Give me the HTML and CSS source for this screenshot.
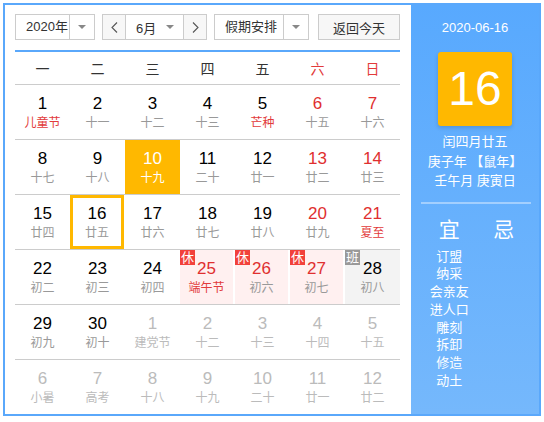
FILE: index.html
```html
<!DOCTYPE html>
<html lang="zh-CN">
<head>
<meta charset="utf-8">
<title>万年历</title>
<link rel="stylesheet" href="styles.css">
</head>
<body>
<div class="cal">
  <div class="main">
    <div class="toolbar">
      <div class="sel year"><span class="val">2020年</span><span class="arr"><i class="tri"></i></span></div>
      <div class="mgroup">
        <span class="nav nav-prev"><svg width="7" height="11" viewBox="0 0 7 11"><path d="M6 0.5 L1 5.5 L6 10.5" fill="none" stroke="#555" stroke-width="1.1"/></svg></span>
        <span class="mval"><span>6月</span><i class="tri"></i></span>
        <span class="nav nav-next"><svg width="7" height="11" viewBox="0 0 7 11"><path d="M1 0.5 L6 5.5 L1 10.5" fill="none" stroke="#555" stroke-width="1.1"/></svg></span>
      </div>
      <div class="sel hol"><span class="val">假期安排</span><span class="arr"><i class="tri"></i></span></div>
      <span class="today">返回今天</span>
    </div>
    <div class="grid">
      <div class="head">
        <span>一</span><span>二</span><span>三</span><span>四</span><span>五</span><span class="we">六</span><span class="we">日</span>
      </div>
      <div class="row">
        <div class="cell"><b>1</b><em class="fest">儿童节</em></div>
        <div class="cell"><b>2</b><em>十一</em></div>
        <div class="cell"><b>3</b><em>十二</em></div>
        <div class="cell"><b>4</b><em>十三</em></div>
        <div class="cell"><b>5</b><em class="fest">芒种</em></div>
        <div class="cell red"><b>6</b><em>十五</em></div>
        <div class="cell red"><b>7</b><em>十六</em></div>
      </div>
      <div class="row">
        <div class="cell"><b>8</b><em>十七</em></div>
        <div class="cell"><b>9</b><em>十八</em></div>
        <div class="cell now"><b>10</b><em>十九</em></div>
        <div class="cell"><b>11</b><em>二十</em></div>
        <div class="cell"><b>12</b><em>廿一</em></div>
        <div class="cell red"><b>13</b><em>廿二</em></div>
        <div class="cell red"><b>14</b><em>廿三</em></div>
      </div>
      <div class="row">
        <div class="cell"><b>15</b><em>廿四</em></div>
        <div class="cell picked"><b>16</b><em>廿五</em></div>
        <div class="cell"><b>17</b><em>廿六</em></div>
        <div class="cell"><b>18</b><em>廿七</em></div>
        <div class="cell"><b>19</b><em>廿八</em></div>
        <div class="cell red"><b>20</b><em>廿九</em></div>
        <div class="cell red"><b>21</b><em class="fest">夏至</em></div>
      </div>
      <div class="row">
        <div class="cell"><b>22</b><em>初二</em></div>
        <div class="cell"><b>23</b><em>初三</em></div>
        <div class="cell"><b>24</b><em>初四</em></div>
        <div class="cell red rest"><span class="badge">休</span><b>25</b><em class="fest">端午节</em></div>
        <div class="cell red rest"><span class="badge">休</span><b>26</b><em>初六</em></div>
        <div class="cell red rest"><span class="badge">休</span><b>27</b><em>初七</em></div>
        <div class="cell work"><span class="badge gray">班</span><b>28</b><em>初八</em></div>
      </div>
      <div class="row">
        <div class="cell"><b>29</b><em>初九</em></div>
        <div class="cell"><b>30</b><em>初十</em></div>
        <div class="cell other"><b>1</b><em>建党节</em></div>
        <div class="cell other"><b>2</b><em>十二</em></div>
        <div class="cell other"><b>3</b><em>十三</em></div>
        <div class="cell other"><b>4</b><em>十四</em></div>
        <div class="cell other"><b>5</b><em>十五</em></div>
      </div>
      <div class="row last">
        <div class="cell other"><b>6</b><em>小暑</em></div>
        <div class="cell other"><b>7</b><em>高考</em></div>
        <div class="cell other"><b>8</b><em>十八</em></div>
        <div class="cell other"><b>9</b><em>十九</em></div>
        <div class="cell other"><b>10</b><em>二十</em></div>
        <div class="cell other"><b>11</b><em>廿一</em></div>
        <div class="cell other"><b>12</b><em>廿二</em></div>
      </div>
    </div>
  </div>
  <div class="side">
    <div class="sdate">2020-06-16</div>
    <div class="bigday">16</div>
    <div class="lunar">
      <div>闰四月廿五</div>
      <div>庚子年 【鼠年】</div>
      <div>壬午月 庚寅日</div>
    </div>
    <div class="divider"></div>
    <div class="yiji">
      <div class="col">
        <div class="ttl">宜</div>
        <ul>
          <li>订盟</li><li>纳采</li><li>会亲友</li><li>进人口</li><li>雕刻</li><li>拆卸</li><li>修造</li><li>动土</li>
        </ul>
      </div>
      <div class="col">
        <div class="ttl">忌</div>
      </div>
    </div>
  </div>
</div>
</body>
</html>
```
FILE: styles.css
```css
body {
  margin: 0;
  font-family: "Liberation Sans", Arial, "Noto Sans CJK SC", sans-serif;
  color: #000;
}
.cal {
  margin: 3px;
  width: 534px;
  height: 409px;
  border: 2px solid #5aa8fb;
  display: flex;
  background: #fff;
}
.main {
  width: 406px;
  box-sizing: border-box;
  padding: 9px 11px 0 10px;
}
.toolbar {
  display: flex;
  height: 26px;
  font-size: 13px;
  color: #333;
}
.sel, .mgroup, .today {
  box-sizing: border-box;
  height: 26px;
  border: 1px solid #ccc;
  display: flex;
  align-items: center;
}
.year { width: 80px; }
.hol { width: 95px; margin-left: 7px; }
.sel .val {
  flex: 1;
  padding-left: 10px;
  height: 24px;
  line-height: 24px;
  border-right: 1px solid #ccc;
}
.sel .arr {
  width: 24px;
  display: flex;
  justify-content: center;
  align-items: center;
}
.tri {
  display: block;
  width: 0;
  height: 0;
  border-left: 4px solid transparent;
  border-right: 4px solid transparent;
  border-top: 4px solid #888;
}
.mgroup {
  width: 105px;
  margin-left: 7px;
}
.nav {
  width: 22px;
  height: 24px;
  background: #f7f7f7;
  display: flex;
  justify-content: center;
  align-items: center;
}
.nav-prev { border-right: 1px solid #ccc; }
.nav-next { border-left: 1px solid #ccc; }
.mval {
  flex: 1;
  display: flex;
  align-items: center;
  justify-content: space-between;
  padding: 0 9px 0 10px;
  height: 24px;
}
.today {
  width: 82px;
  margin-left: 9px;
  justify-content: center;
  background: #f7f7f7;
}
.grid {
  margin-top: 10px;
  border-top: 2px solid #5aa8fb;
}
.head {
  display: grid;
  grid-template-columns: repeat(7, 55px);
  height: 32px;
  border-bottom: 1px solid #ccc;
  font-size: 14px;
  color: #333;
  align-items: center;
  text-align: center;
}
.head .we { color: #e23b3b; }
.row {
  display: grid;
  grid-template-columns: repeat(7, 55px);
  height: 54px;
  border-bottom: 1px solid #ccc;
}
.row.last { border-bottom: none; }
.cell {
  position: relative;
  display: flex;
  flex-direction: column;
  align-items: center;
  padding-top: 9px;
  box-sizing: border-box;
}
.cell b {
  font-weight: normal;
  font-size: 17px;
  line-height: 20px;
}
.cell em {
  font-style: normal;
  font-size: 12px;
  line-height: 16px;
  margin-top: 1px;
  color: #999;
}
.cell em.fest { color: #e23b3b; }
.cell.red b { color: #e02f2f; }
.cell.other b, .cell.other em { color: #bbb; }
.cell.now { background: #ffb800; }
.cell.now b, .cell.now em { color: #fff; }
.cell.picked { box-shadow: inset 0 0 0 3px #ffb800; width: 54px; }
.cell.rest { background: #fff0f0; border-right: 2px solid #fff; }
.cell.work { background: #f3f3f3; }
.badge {
  position: absolute;
  top: 0;
  left: 0;
  width: 15px;
  height: 15px;
  line-height: 15px;
  font-size: 13px;
  text-align: center;
  color: #fff;
  background: #f2413b;
}
.badge.gray { background: #999; }
.side {
  width: 128px;
  background: linear-gradient(#58a9fe, #75b8fc);
  color: #fff;
  text-align: center;
  padding-top: 14px;
  box-sizing: border-box;
}
.sdate {
  font-size: 13px;
  line-height: 18px;
}
.bigday {
  width: 74px;
  height: 74px;
  margin: 15px auto 0;
  background: #ffb800;
  border-radius: 3px;
  box-shadow: 0 2px 4px rgba(0, 0, 0, 0.15);
  font-size: 48px;
  line-height: 74px;
}
.lunar {
  margin-top: 6px;
  font-size: 13px;
  line-height: 19.5px;
}
.divider {
  height: 2px;
  margin: 11px 8px 0 10px;
  background: rgba(255, 255, 255, 0.4);
}
.yiji {
  display: flex;
  padding: 0 8px 0 11px;
  margin-top: 14px;
}
.col { flex: 1; }
.ttl {
  font-size: 21px;
  line-height: 24px;
}
.col ul {
  list-style: none;
  margin: 6px 0 0;
  padding: 0;
  font-size: 13px;
  line-height: 17.8px;
}
```
